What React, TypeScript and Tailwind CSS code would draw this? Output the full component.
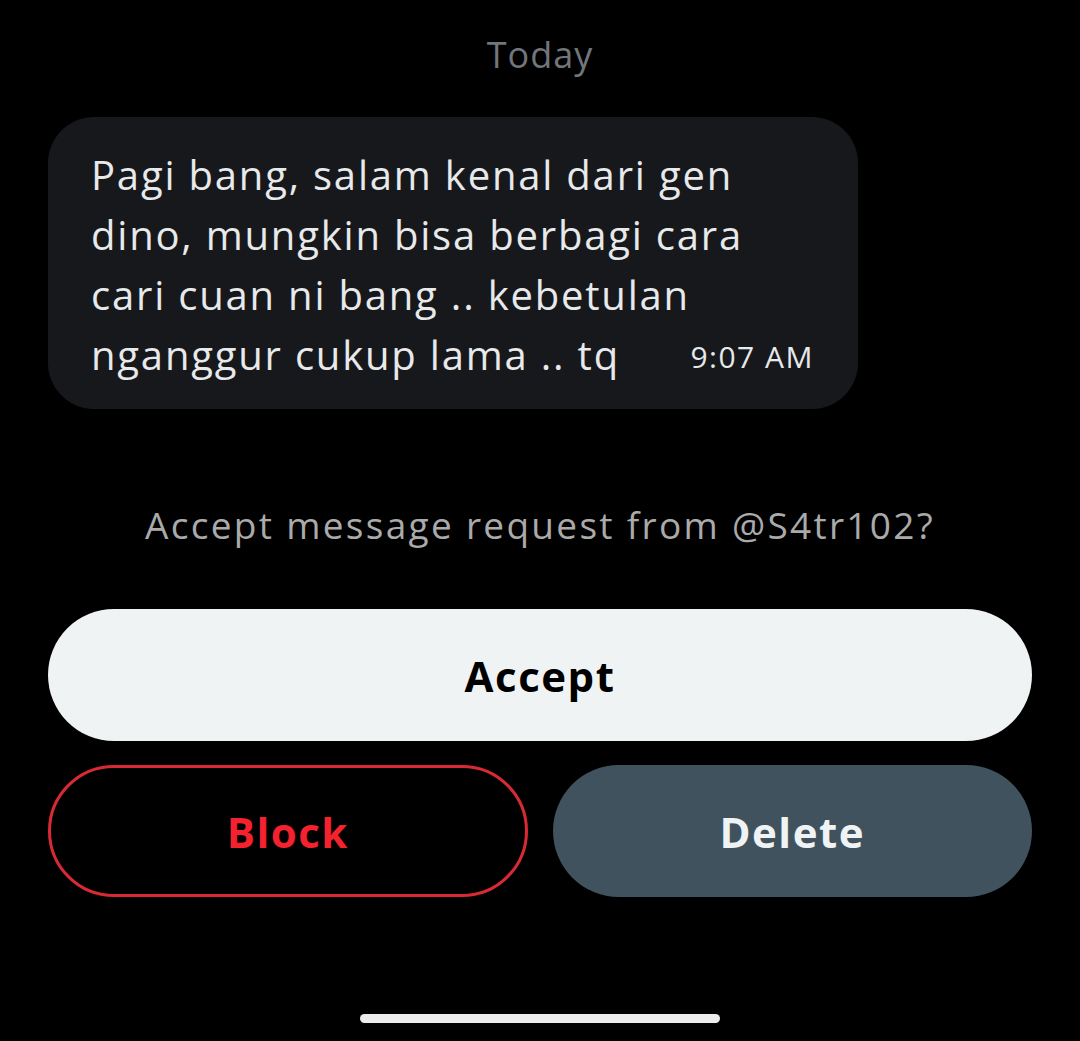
const App = () => {
  const lines = [
    'Pagi bang, salam kenal dari gen',
    'dino, mungkin bisa berbagi cara',
    'cari cuan ni bang .. kebetulan',
  ];

  return (
    <div className="min-h-[1041px] w-[1080px] bg-black flex flex-col font-['Open_Sans',sans-serif]">
      <div className="pt-[30px] text-center text-[36px] leading-[50px] tracking-[1px] text-[#71767b]">Today</div>

      <div className="px-[48px] pt-[37px]">
        <div className="w-[810px] rounded-[46px] bg-[#16181c] pl-[43px] pr-[44px] pt-[28px] pb-[24px] text-[#e7e9ea]">
          {lines.map((line) => (
            <div key={line} className="whitespace-nowrap text-[40px] leading-[60px] tracking-[1.8px]">
              {line}
            </div>
          ))}
          <div className="flex items-end justify-between">
            <span className="whitespace-nowrap text-[40px] leading-[60px] tracking-[1.8px]">nganggur cukup lama .. tq</span>
            <span className="mb-[8px] whitespace-nowrap text-[30px] leading-[40px] tracking-[1.5px]">9:07 AM</span>
          </div>
        </div>
      </div>

      <div className="pt-[90px] text-center text-[37px] leading-[52px] tracking-[2.3px] text-[#aaaaaa]">
        Accept message request from @S4tr102?
      </div>

      <div className="px-[48px] pt-[58px] flex flex-col gap-[24px]">
        <button className="h-[132px] w-full rounded-full bg-[#eff3f4] text-[42px] font-bold tracking-[1.5px] text-black">
          Accept
        </button>
        <div className="grid grid-cols-2 gap-[25px]">
          <button className="h-[132px] rounded-full border-[3px] border-[#d92a33] text-[42px] font-bold tracking-[1.5px] text-[#f4212e]">
            Block
          </button>
          <button className="h-[132px] rounded-full bg-[#3f525e] text-[42px] font-bold tracking-[1.5px] text-[#eff3f4]">
            Delete
          </button>
        </div>
      </div>

      <div className="mt-auto pb-[18px] flex justify-center">
        <div className="h-[9px] w-[360px] rounded-full bg-[#ececec]" />
      </div>
    </div>
  );
};

export default App;
